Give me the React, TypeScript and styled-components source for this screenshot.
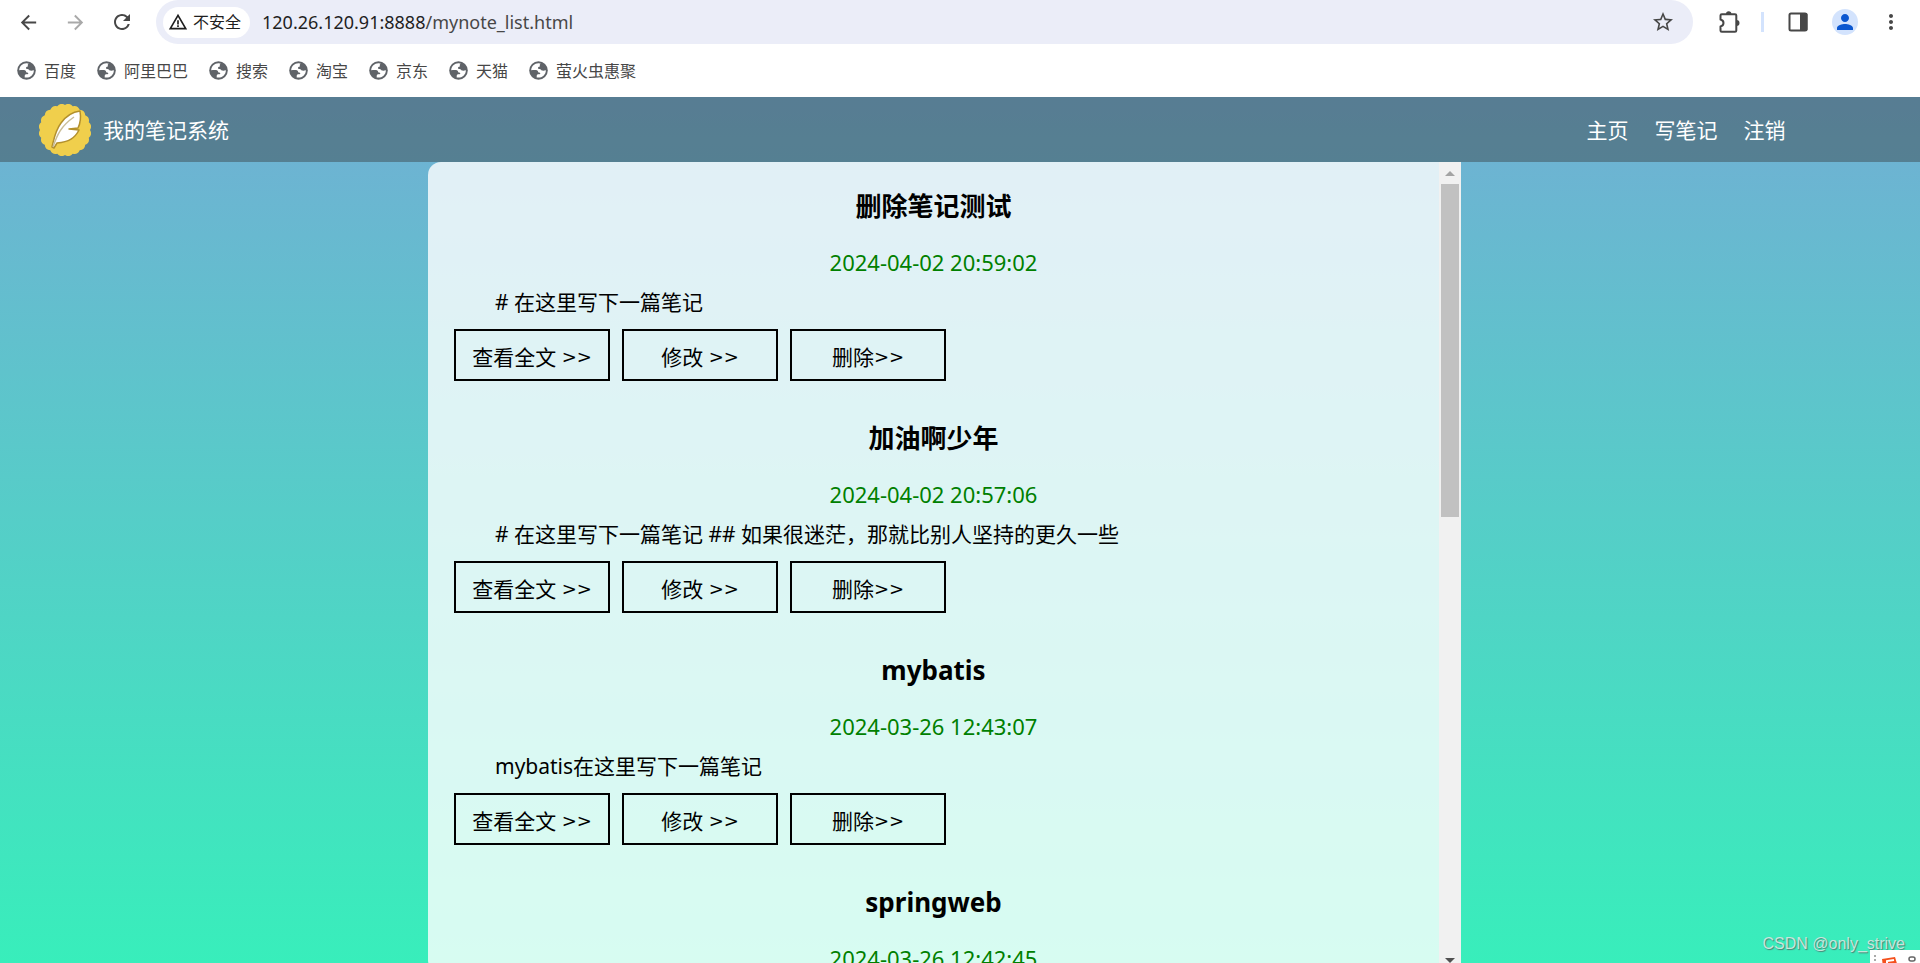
import React from "react";
import styled, { createGlobalStyle } from "styled-components";
import {
  MdArrowBack,
  MdArrowForward,
  MdRefresh,
  MdStarBorder,
  MdWarningAmber,
  MdMoreVert,
  MdPerson,
} from "react-icons/md";

const SANS = `"Noto Sans", "Noto Sans CJK SC", sans-serif`;

const GlobalStyle = createGlobalStyle`
  *, *::before, *::after { box-sizing: border-box; }
  body { margin: 0; font-family: ${SANS}; color: #000; }
  button, input { font-family: inherit; }
`;

const Window = styled.div`
  height: 100vh;
  display: flex;
  flex-direction: column;
  overflow: hidden;
  position: relative;
  background: #fff;
`;

/* Browser chrome */

const Toolbar = styled.div`
  display: flex;
  align-items: center;
  height: 44px;
  flex: none;
  padding: 0 17px 0 16px;
`;

const IconButton = styled.button<{ $dim?: boolean; $space?: number }>`
  display: flex;
  align-items: center;
  justify-content: center;
  width: 24px;
  height: 24px;
  flex: none;
  padding: 0;
  border: 0;
  background: none;
  color: ${(p) => (p.$dim ? "#a9a9a9" : "#474747")};
  margin-right: ${(p) => p.$space ?? 0}px;
`;

const AddressBar = styled.div`
  display: flex;
  align-items: center;
  flex: 1;
  height: 44px;
  padding: 0 18px 0 7px;
  border-radius: 22px;
  background: #ebedf8;
  margin-right: 24px;
`;

const SecurityChip = styled.button`
  display: flex;
  align-items: center;
  gap: 5px;
  height: 31px;
  padding: 0 9px 0 5px;
  border: 0;
  border-radius: 16px;
  background: #fff;
  color: #1f1f1f;
  font-size: 16px;
  line-height: 24px;
`;

const Url = styled.div`
  flex: 1;
  padding-left: 12px;
  font-size: 18px;
  line-height: 24px;
  color: #1f1f1f;
  span { color: #474747; }
`;

const ToolDivider = styled.span`
  width: 3px;
  height: 20px;
  background: #d3e3fd;
  margin-right: 22px;
`;

const Avatar = styled.button`
  display: flex;
  align-items: center;
  justify-content: center;
  width: 26px;
  height: 26px;
  padding: 0;
  border: 0;
  border-radius: 50%;
  background: #d3e3fd;
  color: #0b57d0;
  margin-right: 21px;
`;

const Bookmarks = styled.nav`
  display: flex;
  align-items: center;
  gap: 21px;
  height: 53px;
  flex: none;
  padding-left: 17px;
`;

const Bookmark = styled.a`
  display: flex;
  align-items: center;
  gap: 8px;
  font-size: 16px;
  line-height: 24px;
  color: #474747;
  text-decoration: none;
`;

/* Notes page */

const Page = styled.div`
  flex: 1;
  min-height: 0;
  display: flex;
  flex-direction: column;
  background: linear-gradient(to bottom, #71afd4, #38eebb);
`;

const Header = styled.header`
  display: flex;
  align-items: center;
  height: 65px;
  flex: none;
  padding: 0 7% 0 39px;
  background: rgba(50, 50, 50, 0.4);
  color: #fff;
  font-size: 21px;
  line-height: 28px;
`;

const Brand = styled.span`
  margin-left: 12px;
`;

const Nav = styled.nav`
  display: flex;
  gap: 26px;
  margin-left: auto;
  a { color: inherit; text-decoration: none; }
`;

const Columns = styled.div`
  flex: 1;
  min-height: 0;
  display: grid;
  grid-template-columns: 428fr 1033fr 459fr;
`;

const Panel = styled.main`
  grid-column: 2;
  display: flex;
  height: calc(100% + 10px);
  border-radius: 13px 0 0 13px;
  overflow: hidden;
  background: rgba(255, 255, 255, 0.8);
`;

const NoteList = styled.div`
  flex: 1;
  overflow: hidden;
  padding: 27px 26px 0;
`;

const Note = styled.article`
  margin-bottom: 40px;
`;

const Title = styled.h3`
  margin: 0 0 25px;
  font-size: 26px;
  line-height: 34px;
  font-weight: 700;
  text-align: center;
`;

const NoteDate = styled.time`
  display: block;
  margin-bottom: 12px;
  font-size: 22px;
  line-height: 28px;
  color: #008000;
  text-align: center;
`;

const Summary = styled.p`
  margin: 0 0 13px;
  font-size: 21px;
  line-height: 28px;
  text-indent: 41px;
`;

const Actions = styled.div`
  display: flex;
  gap: 12px;
`;

const ActionLink = styled.a`
  display: flex;
  align-items: center;
  justify-content: center;
  width: 156px;
  height: 52px;
  padding-top: 4px;
  border: 2px solid #000;
  color: #000;
  font-size: 21px;
  line-height: 28px;
  white-space: pre;
  text-decoration: none;
`;

const Chevrons = styled.span`
  font-family: "DejaVu Sans", sans-serif;
  font-size: 18px;
`;

const ScrollTrack = styled.div`
  display: flex;
  flex-direction: column;
  align-items: center;
  width: 22px;
  background: #f1f1f1;
`;

const ScrollArrow = styled.svg`
  width: 22px;
  height: 22px;
  flex: none;
`;

const ScrollThumb = styled.div`
  width: 18px;
  height: 41%;
  margin-bottom: auto;
  background: #c1c1c1;
`;

const Watermark = styled.div`
  position: absolute;
  right: 15px;
  bottom: 7px;
  font-family: "Liberation Sans", sans-serif;
  font-size: 16px;
  line-height: 24px;
  color: #c5e6dc;
  text-shadow: 1px 1px 1px #4d7f73;
`;

const ImeBar = styled.div`
  position: absolute;
  right: 0;
  bottom: 0;
  width: 50px;
  height: 13px;
  overflow: hidden;
  background: #fff;
`;

const Globe = () => (
  <svg width="19" height="19" viewBox="0 0 19 19" aria-hidden="true">
    <circle cx="9.5" cy="9.5" r="9.3" fill="#5f6368" />
    <path
      d="M9.8 2.2C5.700 2 2.400 5.200 2.200 9.200c2.200-.1 5-.4 6.100.3 1 .7.700 1.700 1.400 2 .8.300 1.600.1 1.600 1 0 1.100-1.700.6-2.900.9-.7.200-.7 1.200-.7 3 4.600 1 9-2.200 9.200-7-.8-.2-1.700.4-2.600.4-1.200 0-2-.4-2.500-1.200-.5-.7-1.800-.2-2.500-.8-.6-.6-.2-1.800.7-2 1-.2.9-.8.8-1.600-.1-.8.400-1.300 1-1.500-.6-.3-1.300-.5-2-.5Z"
      fill="#fff"
    />
  </svg>
);

const PuzzleIcon = () => (
  <svg width="24" height="24" viewBox="0 0 24 24" aria-hidden="true">
    <path
      d="M3.500 5.500a1.300 1.300 0 0 1 1.300-1.300H18a1.300 1.300 0 0 1 1.300 1.300v15a1.300 1.300 0 0 1-1.300 1.300H4.800a1.300 1.300 0 0 1-1.300-1.300v-4c2-.5 3-1.600 3-3.500s-1-3-3-3.500Z"
      fill="none"
      stroke="#474747"
      strokeWidth="2"
      strokeLinejoin="round"
    />
    <path d="M9 4a2.700 2.700 0 0 1 5.400 0ZM19.500 10a2.700 2.700 0 0 1 0 6Z" fill="#474747" />
  </svg>
);

const SidePanelIcon = () => (
  <svg width="20" height="20" viewBox="0 0 20 20" aria-hidden="true">
    <rect x="1.5" y="1.5" width="17" height="17" rx="1.5" fill="none" stroke="#474747" strokeWidth="2" />
    <path d="M12 1h6.500l1 1v16l-1 1H12z" fill="#474747" />
  </svg>
);

const scallops = Array.from({ length: 20 }, (_, i) => {
  const a = (i * Math.PI) / 10;
  const b = ((i + 1) * Math.PI) / 10;
  const at = (t: number) => `${(26 + 25 * Math.cos(t)).toFixed(2)} ${(26 + 25 * Math.sin(t)).toFixed(2)}`;
  return `${i === 0 ? `M${at(a)}` : ""}A6 6 0 0 1 ${at(b)}`;
}).join("") + "Z";

const Logo = () => (
  <svg width="52" height="52" viewBox="0 0 52 52" aria-hidden="true">
    <path d={scallops} fill="#f0cf4c" />
    <path
      d="M13 43C15 35 16 27 22 19 27 12 33 8 41 7c1 6 1 11-2 17l-9 1 10 1c-4 8-10 12-22 13l-3 5Z"
      fill="#fff"
      stroke="#b3902c"
      strokeWidth="1.5"
      strokeLinejoin="round"
    />
    <path d="M14 43C18 31 22 22 35 13" fill="none" stroke="#c9bd98" strokeWidth="1.5" />
  </svg>
);

const bookmarks = ["百度", "阿里巴巴", "搜索", "淘宝", "京东", "天猫", "萤火虫惠聚"];

const notes = [
  { title: "删除笔记测试", date: "2024-04-02 20:59:02", text: "# 在这里写下一篇笔记" },
  { title: "加油啊少年", date: "2024-04-02 20:57:06", text: "# 在这里写下一篇笔记 ## 如果很迷茫，那就比别人坚持的更久一些" },
  { title: "mybatis", date: "2024-03-26 12:43:07", text: "mybatis在这里写下一篇笔记" },
  { title: "springweb", date: "2024-03-26 12:42:45", text: "" },
];

const actions = ["查看全文 ", "修改 ", "删除"];

export default function App() {
  return (
    <Window>
      <GlobalStyle />
      <Toolbar>
        <IconButton $space={23} aria-label="后退"><MdArrowBack size={23} /></IconButton>
        <IconButton $dim $space={23} aria-label="前进"><MdArrowForward size={23} /></IconButton>
        <IconButton $space={22} aria-label="重新加载"><MdRefresh size={24} /></IconButton>
        <AddressBar>
          <SecurityChip><MdWarningAmber size={20} />不安全</SecurityChip>
          <Url>120.26.120.91:8888<span>/mynote_list.html</span></Url>
          <IconButton aria-label="收藏"><MdStarBorder size={24} /></IconButton>
        </AddressBar>
        <IconButton $space={20} aria-label="扩展程序"><PuzzleIcon /></IconButton>
        <ToolDivider />
        <IconButton $space={22} aria-label="侧边栏"><SidePanelIcon /></IconButton>
        <Avatar aria-label="用户"><MdPerson size={24} /></Avatar>
        <IconButton aria-label="菜单"><MdMoreVert size={26} /></IconButton>
      </Toolbar>
      <Bookmarks>
        {bookmarks.map((name) => (
          <Bookmark href="#" key={name}><Globe />{name}</Bookmark>
        ))}
      </Bookmarks>
      <Page>
        <Header>
          <Logo />
          <Brand>我的笔记系统</Brand>
          <Nav>
            <a href="#">主页</a>
            <a href="#">写笔记</a>
            <a href="#">注销</a>
          </Nav>
        </Header>
        <Columns>
          <Panel>
            <NoteList>
              {notes.map((note) => (
                <Note key={note.title}>
                  <Title>{note.title}</Title>
                  <NoteDate>{note.date}</NoteDate>
                  {note.text && (
                    <>
                      <Summary>{note.text}</Summary>
                      <Actions>
                        {actions.map((label) => (
                          <ActionLink href="#" key={label}>{label}<Chevrons>&gt;&gt;</Chevrons></ActionLink>
                        ))}
                      </Actions>
                    </>
                  )}
                </Note>
              ))}
            </NoteList>
            <ScrollTrack>
              <ScrollArrow viewBox="0 0 22 22"><path d="M6 14l5-5 5 5z" fill="#a3a3a3" /></ScrollArrow>
              <ScrollThumb />
              <ScrollArrow viewBox="0 0 22 22"><path d="M6 7l5 5 5-5z" fill="#505050" /></ScrollArrow>
            </ScrollTrack>
          </Panel>
        </Columns>
      </Page>
      <Watermark>CSDN @only_strive</Watermark>
      <ImeBar>
        <svg width="50" height="13" viewBox="0 0 50 13" aria-hidden="true">
          <path d="M5 1v12" stroke="#aaa" strokeWidth="2" strokeDasharray="2 2" />
          <path d="M12 5l13-2 3 10H13z" fill="#f4511e" />
          <path d="M24 6l-7 1v3l7 0 1 4" fill="none" stroke="#fff" strokeWidth="2" />
          <rect x="39" y="3" width="6" height="4" rx="2" fill="none" stroke="#666" strokeWidth="1.5" />
        </svg>
      </ImeBar>
    </Window>
  );
}
